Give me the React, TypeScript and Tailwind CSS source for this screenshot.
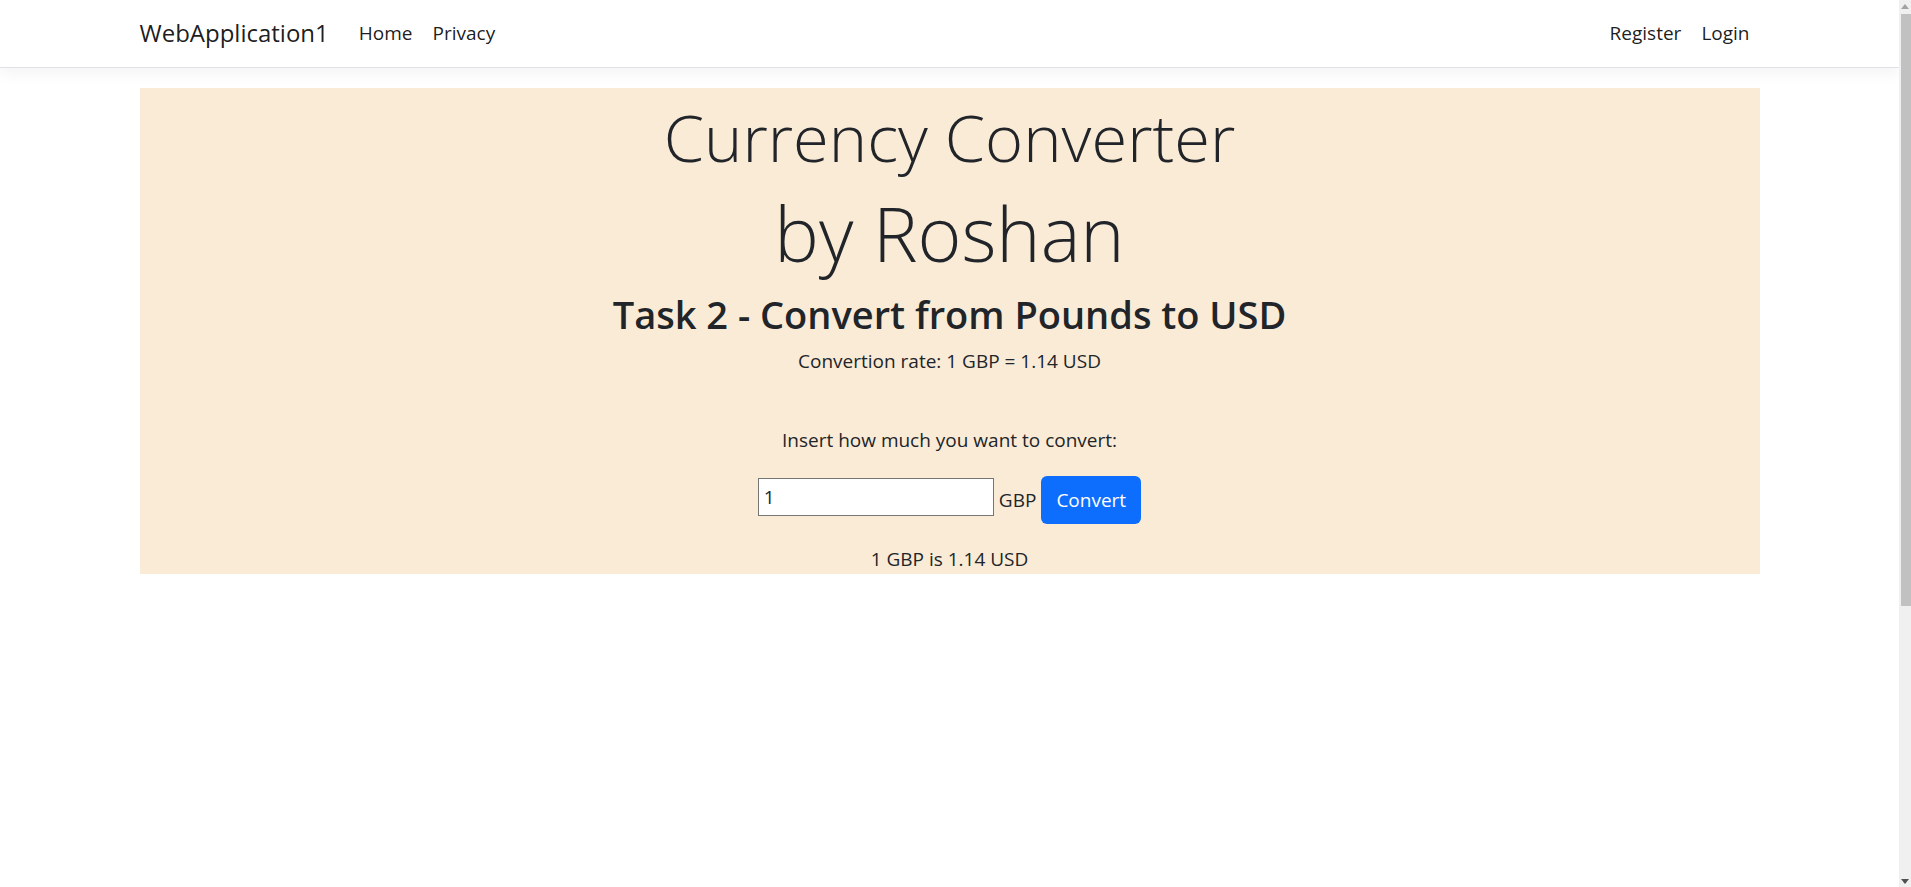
export default function App() {
  return (
    <div className="flex h-screen overflow-hidden bg-white text-[#212529] font-['Open_Sans',sans-serif]">
      <div className="flex-1 flex flex-col">
        <header className="h-[68px] border-b border-[#dee2e6] shadow-[0_5px_15px_rgba(0,0,0,0.05)]">
          <nav className="w-[1620px] mx-auto h-full flex items-center">
            <a className="text-[24px] text-black/90 mr-[20px] pb-[2px]">WebApplication1</a>
            <ul className="flex text-[19px] text-black/90">
              <li className="px-[10px]">Home</li>
              <li className="px-[10px]">Privacy</li>
            </ul>
            <ul className="flex ml-auto text-[19px] text-black/90">
              <li className="px-[10px]">Register</li>
              <li className="px-[10px]">Login</li>
            </ul>
          </nav>
        </header>

        <main className="w-[1620px] mx-auto mt-[20px] h-[486px] pt-[9px] bg-[#faebd7] flex flex-col items-center text-center">
          <h1 className="text-[65px] font-light leading-[80px]">Currency Converter</h1>
          <h1 className="text-[75px] font-light leading-[112px]">by Roshan</h1>
          <h2 className="text-[38px] font-semibold leading-[46px] mt-[2px]">Task 2 - Convert from Pounds to USD</h2>
          <p className="text-[19px] leading-[29px] mt-[10px]">Convertion rate: 1 GBP = 1.14 USD</p>
          <p className="text-[19px] leading-[29px] mt-[50px]">Insert how much you want to convert:</p>
          <div className="flex items-start gap-[5px] mt-[21px]">
            <input
              defaultValue="1"
              className="mt-[2px] w-[236px] h-[38px] border border-[#767676] bg-white px-[5px] text-[19px] outline-none"
            />
            <span className="text-[19px] leading-[48px]">GBP</span>
            <button className="h-[48px] px-[15px] rounded-[6px] bg-[#0d6efd] text-white text-[19px]">Convert</button>
          </div>
          <p className="text-[19px] leading-[29px] mt-[21px]">1 GBP is 1.14 USD</p>
        </main>
      </div>

      <div className="w-[12px] bg-[#f0f0f0] flex flex-col">
        <div className="h-[12px] flex items-center justify-center">
          <svg width="8" height="5" viewBox="0 0 8 5"><path d="M0 5 L4 0 L8 5 Z" fill="#a3a3a3" /></svg>
        </div>
        <div className="flex-1 pl-[2px] pt-[2px]">
          <div className="h-[592px] bg-[#c1c1c1]" />
        </div>
        <div className="h-[12px] flex items-center justify-center">
          <svg width="8" height="5" viewBox="0 0 8 5"><path d="M0 0 L4 5 L8 0 Z" fill="#505050" /></svg>
        </div>
      </div>
    </div>
  );
}
